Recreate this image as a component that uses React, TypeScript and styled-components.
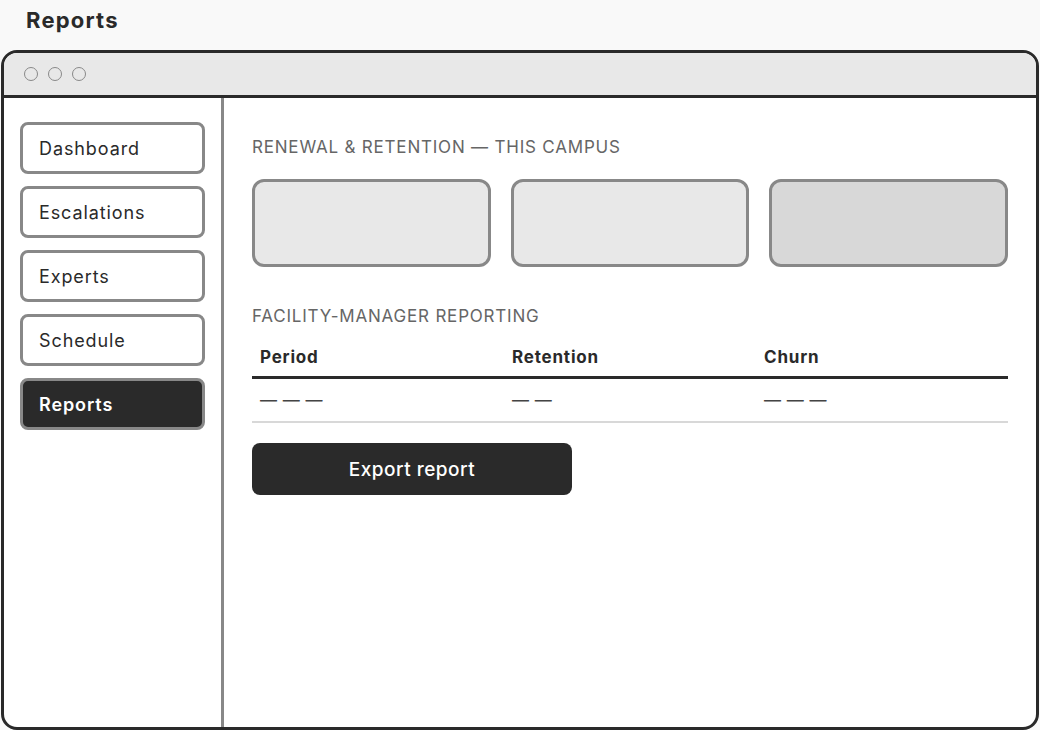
import styled, { createGlobalStyle } from 'styled-components';

const GlobalStyle = createGlobalStyle`
  html, body {
    margin: 0;
    padding: 0;
    background: #f9f9f9;
    font-family: Inter, "Noto Sans", "Liberation Sans", sans-serif;
    color: #2a2a2a;
  }
`;

const navItems = ['Dashboard', 'Escalations', 'Experts', 'Schedule', 'Reports'];
const summaryTints = ['#e8e8e8', '#e8e8e8', '#d8d8d8'];
const columns = [
  { title: 'Period', value: '— — —' },
  { title: 'Retention', value: '— —' },
  { title: 'Churn', value: '— — —' },
];

const App = () => {
  return (
    <Page>
      <GlobalStyle />
      <PageTitle>Reports</PageTitle>
      <Window>
        <TitleBar>
          <Dot />
          <Dot />
          <Dot />
        </TitleBar>
        <Body>
          <Sidebar>
            {navItems.map((item) => (
              <NavButton key={item} $active={item === 'Reports'}>
                {item}
              </NavButton>
            ))}
          </Sidebar>
          <Main>
            <SectionLabel>Renewal &amp; retention — this campus</SectionLabel>
            <CardRow>
              {summaryTints.map((tint, i) => (
                <SummaryCard key={i} $tint={tint} />
              ))}
            </CardRow>
            <SectionLabel>Facility-manager reporting</SectionLabel>
            <Table>
              <thead>
                <tr>
                  {columns.map((c) => (
                    <HeadCell key={c.title}>{c.title}</HeadCell>
                  ))}
                </tr>
              </thead>
              <tbody>
                <tr>
                  {columns.map((c) => (
                    <Cell key={c.title}>{c.value}</Cell>
                  ))}
                </tr>
              </tbody>
            </Table>
            <ExportButton>Export report</ExportButton>
          </Main>
        </Body>
      </Window>
    </Page>
  );
};

export default App;

const Page = styled.div`
  height: 730px;
  display: flex;
  flex-direction: column;
  padding: 0 1px;
  box-sizing: border-box;
`;

const PageTitle = styled.div`
  font-size: 22px;
  font-weight: 700;
  letter-spacing: 1.2px;
  padding: 6px 0 0 25px;
  height: 50px;
  line-height: 28px;
  box-sizing: border-box;
`;

const Window = styled.div`
  flex: 1;
  display: flex;
  flex-direction: column;
  border: 3px solid #2a2a2a;
  border-radius: 16px;
  background: #fff;
  overflow: hidden;
`;

const TitleBar = styled.div`
  height: 42px;
  display: flex;
  align-items: center;
  gap: 10px;
  padding-left: 20px;
  background: #e8e8e8;
  border-bottom: 3px solid #2a2a2a;
`;

const Dot = styled.span`
  flex: none;
  width: 14px;
  height: 14px;
  box-sizing: border-box;
  border: 1.5px solid #888;
  border-radius: 50%;
`;

const Body = styled.div`
  flex: 1;
  display: flex;
`;

const Sidebar = styled.nav`
  width: 220px;
  box-sizing: border-box;
  padding: 24px 16px 0 16px;
  border-right: 3px solid #888;
  display: flex;
  flex-direction: column;
  gap: 12px;
`;

const NavButton = styled.div<{ $active?: boolean }>`
  height: 52px;
  box-sizing: border-box;
  display: flex;
  align-items: center;
  padding-left: 16px;
  border: 3px solid #888;
  border-radius: 8px;
  font-size: 18px;
  letter-spacing: 0.9px;
  font-weight: ${({ $active }) => ($active ? 600 : 400)};
  background: ${({ $active }) => ($active ? '#2a2a2a' : '#fff')};
  color: ${({ $active }) => ($active ? '#fff' : '#2a2a2a')};
`;

const Main = styled.main`
  flex: 1;
  padding: 39px 28px 0 28px;
  display: flex;
  flex-direction: column;
`;

const SectionLabel = styled.div`
  font-size: 17px;
  text-transform: uppercase;
  letter-spacing: 0.8px;
  color: #666;
  line-height: 20px;
  margin-bottom: 22px;
`;

const CardRow = styled.div`
  display: grid;
  grid-template-columns: repeat(3, 1fr);
  gap: 20px;
  margin-bottom: 39px;
`;

const SummaryCard = styled.div<{ $tint: string }>`
  height: 88px;
  box-sizing: border-box;
  border: 3px solid #888;
  border-radius: 12px;
  background: ${({ $tint }) => $tint};
`;

const Table = styled.table`
  width: 100%;
  border-collapse: collapse;
  table-layout: fixed;
  margin-top: -8px;
  margin-bottom: 20px;
`;

const HeadCell = styled.th`
  text-align: left;
  font-size: 17px;
  font-weight: 700;
  letter-spacing: 0.8px;
  padding: 7px 8px 9px;
  border-bottom: 3px solid #2a2a2a;
`;

const Cell = styled.td`
  font-size: 17px;
  letter-spacing: 0.5px;
  color: #444;
  padding: 11px 8px 11px;
  border-bottom: 2px solid #d8d8d8;
`;

const ExportButton = styled.button`
  width: 320px;
  height: 52px;
  border: none;
  border-radius: 8px;
  background: #2a2a2a;
  color: #fff;
  font-family: inherit;
  font-size: 19px;
  font-weight: 500;
  letter-spacing: 0.5px;
`;
